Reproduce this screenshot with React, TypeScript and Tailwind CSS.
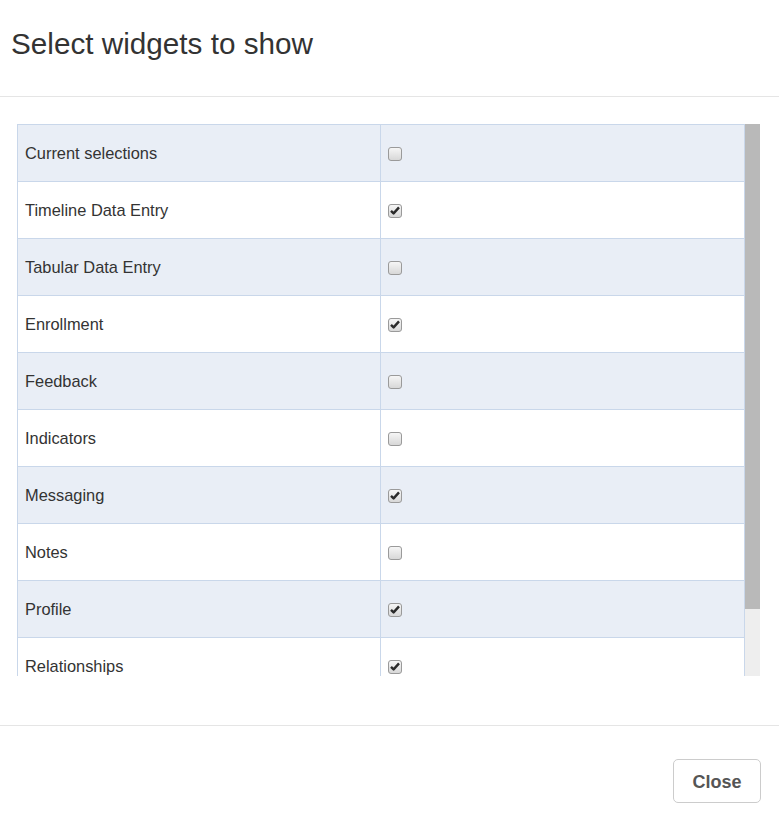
import React from "react";

const widgets = [
  { name: "Current selections", on: false },
  { name: "Timeline Data Entry", on: true },
  { name: "Tabular Data Entry", on: false },
  { name: "Enrollment", on: true },
  { name: "Feedback", on: false },
  { name: "Indicators", on: false },
  { name: "Messaging", on: true },
  { name: "Notes", on: false },
  { name: "Profile", on: true },
  { name: "Relationships", on: true },
];

const Box = ({ on }: { on: boolean }) => (
  <span className="inline-flex w-[14px] h-[14px] items-center justify-center rounded-[3px] border border-[#9a9a9a] bg-gradient-to-b from-[#f6f6f6] to-[#d8d8d8]">
    {on && (
      <svg width="10" height="9" viewBox="0 0 10 9">
        <path d="M1 4.8 L3.6 7.4 L9 1.4" fill="none" stroke="#2a2a2a" strokeWidth="2.4" strokeLinejoin="round" />
      </svg>
    )}
  </span>
);

const App = () => {
  return (
    <div className="w-[779px] h-[814px] bg-white text-[#333] flex flex-col font-['Liberation_Sans',Arial,sans-serif]">
      <div className="h-[97px] border-b border-[#e5e5e5] px-[11px] pt-[25px]">
        <h4 className="text-[29.7px] leading-[38px]">Select widgets to show</h4>
      </div>

      <div className="h-[629px] pt-[27px] pl-[17px] pr-[19px] border-b border-[#e5e5e5]">
        <div className="flex h-[552px]">
          <div className="flex-1 overflow-hidden">
            <table className="w-full border-collapse text-[16.4px]">
              <tbody>
                {widgets.map((w, i) => (
                  <tr key={w.name} className={i % 2 === 0 ? "bg-[#e9eef6]" : "bg-white"}>
                    <td className="w-[363px] h-[57px] border border-[#c9d7ea] pl-[7px] align-middle">{w.name}</td>
                    <td className="h-[57px] border border-[#c9d7ea] pl-[7px] align-middle">
                      <div className="flex items-center pt-[1px]">
                        <Box on={w.on} />
                      </div>
                    </td>
                  </tr>
                ))}
              </tbody>
            </table>
          </div>
          <div className="w-[15px] flex flex-col bg-[#eeeeee]">
            <div className="h-[485px] bg-[#b9b9b9]" />
          </div>
        </div>
      </div>

      <div className="flex-1 flex items-start justify-end pt-[33px] pr-[18px]">
        <button className="w-[88px] h-[44px] rounded-[5px] border border-[#cccccc] bg-white text-[18px] font-bold text-[#555] pt-[2px]">
          Close
        </button>
      </div>
    </div>
  );
};

export default App;
